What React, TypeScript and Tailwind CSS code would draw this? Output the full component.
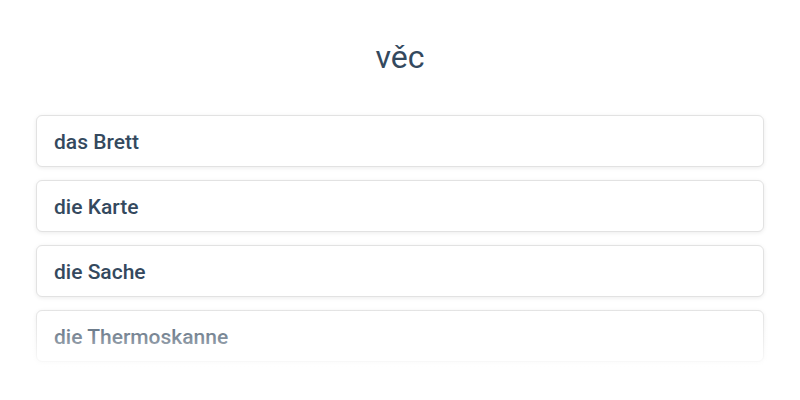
const words = ["das Brett", "die Karte", "die Sache", "die Thermoskanne"];

export default function App() {
  return (
    <div
      className="w-[800px] h-[400px] bg-white overflow-hidden"
      style={{ fontFamily: "Roboto, 'Liberation Sans', sans-serif" }}
    >
      <h1 className="pt-[39px] text-center text-[32px] leading-[36px] text-[#34495e]">
        věc
      </h1>
      <div className="relative mt-[40px] px-[36px]">
        <div className="flex flex-col gap-[13px]">
          {words.map((w) => (
            <div
              key={w}
              className="rounded-[6px] border border-[#e2e2e2] bg-white px-[17px] pt-[12px] pb-[10px] text-[21px] leading-[28px] font-medium text-[#34495e] shadow-[0_1px_4px_rgba(0,0,0,0.08)]"
            >
              {w}
            </div>
          ))}
        </div>
        <div className="absolute left-0 right-0 top-[190px] h-[70px] bg-gradient-to-b from-white/0 via-white/40 to-white" />
      </div>
    </div>
  );
}
